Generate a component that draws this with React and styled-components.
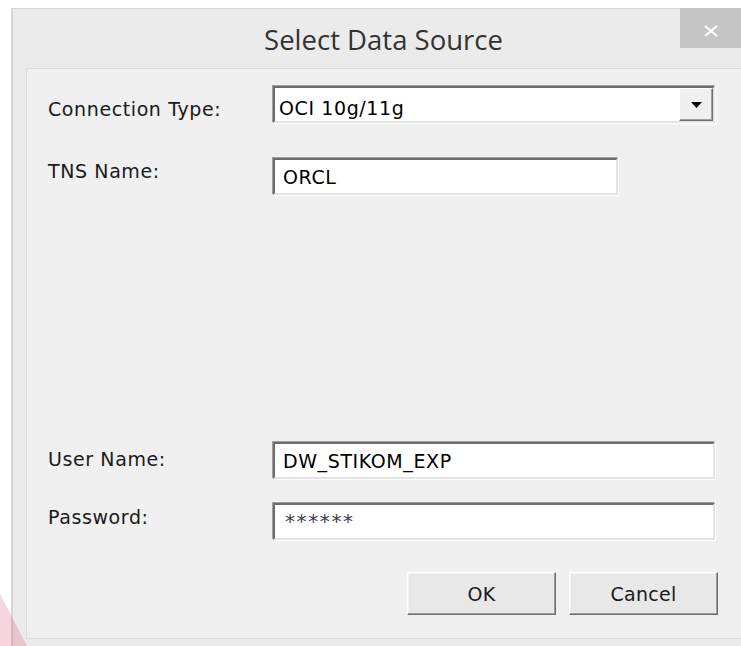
import React from 'react';
import styled, { createGlobalStyle } from 'styled-components';

const GlobalStyle = createGlobalStyle`
  html, body {
    margin: 0;
    padding: 0;
    background: #ffffff;
    overflow: hidden;
  }
`;

const Page = styled.div`
  position: relative;
  width: 741px;
  height: 646px;
  overflow: hidden;
  padding: 8px 0 0 11px;
  box-sizing: border-box;
`;

const Window = styled.div`
  width: 743px;
  height: 660px;
  box-sizing: border-box;
  border-left: 2px solid #d6d6d6;
  border-top: 1px solid #d6d6d6;
  background: #ebebeb;
  display: flex;
  flex-direction: column;
`;

const TitleBar = styled.div`
  height: 59px;
  flex: none;
  display: grid;
  grid-template-columns: 1fr auto 1fr;
  align-items: start;
`;

const Title = styled.div`
  grid-column: 2;
  padding-top: 15px;
  font-family: "Open Sans", "Noto Sans", sans-serif;
  font-size: 27.5px;
  line-height: 32px;
  color: #333333;
`;

const CloseButton = styled.div`
  grid-column: 3;
  justify-self: end;
  margin-top: -1px;
  width: 74px;
  height: 40px;
  background: #c6c6c6;
  display: flex;
  align-items: center;
  justify-content: center;
  padding: 6px 12px 0 0;
  box-sizing: border-box;
`;

const Panel = styled.div`
  margin-left: 13px;
  width: 720px;
  flex: none;
  box-sizing: border-box;
  background: #f0f0f0;
  border: 1px solid #dcdcdc;
  padding: 17px 29px 23px 21px;
  display: flex;
  flex-direction: column;
`;

const Row = styled.div`
  display: flex;
  align-items: flex-start;
  margin-top: ${p => p.$gap || 0}px;
`;

const fieldFont = `
  font-family: "DejaVu Sans", sans-serif;
  font-size: 19px;
  line-height: 20px;
  letter-spacing: 0.6px;
`;

const Label = styled.div`
  ${fieldFont}
  width: 225px;
  flex: none;
  padding-top: ${p => p.$offset}px;
  color: #1a1a1a;
`;

const sunken = `
  border-style: solid;
  border-width: 2px;
  border-color: #6d6d6d #e4e4e4 #e4e4e4 #6d6d6d;
  box-shadow: -1px -1px 0 #a0a0a0, 1px 1px 0 #ffffff;
`;

const Combo = styled.div`
  ${sunken}
  width: 442px;
  height: 37px;
  box-sizing: border-box;
  background: #ffffff;
  display: flex;
  align-items: stretch;
`;

const ComboText = styled.div`
  ${fieldFont}
  flex: 1;
  padding: 10px 0 0 4px;
  color: #000000;
`;

const DropButton = styled.div`
  width: 32px;
  background: #f0f0f0;
  border-style: solid;
  border-width: 1px;
  border-color: #ffffff #6d6d6d #6d6d6d #ffffff;
  box-shadow: inset -1px -1px 0 #a0a0a0;
  display: flex;
  align-items: center;
  justify-content: center;
`;

const Edit = styled.div`
  ${fieldFont}
  width: ${p => p.$width}px;
  height: 37px;
  box-sizing: border-box;
  background: #ffffff;
  ${sunken}
  padding: ${p => (p.$masked ? 6 : 7)}px 0 0 ${p => (p.$masked ? 10 : 8)}px;
  ${p => p.$masked && 'font-size: 20px; letter-spacing: 1.6px;'}
  color: ${p => (p.$masked ? '#3c3c4c' : '#000000')};
`;

const ButtonRow = styled.div`
  display: flex;
  justify-content: flex-end;
  gap: 13px;
  margin-top: 32px;
  margin-right: -2px;
`;

const Button = styled.div`
  width: 149px;
  height: 43px;
  box-sizing: border-box;
  background: #e8e8e8;
  border-style: solid;
  border-width: 1px;
  border-color: #ffffff #696969 #696969 #ffffff;
  box-shadow: inset -1px -1px 0 #a0a0a0, inset 1px 1px 0 #f4f4f4;
  display: flex;
  align-items: center;
  justify-content: center;
  font-family: "DejaVu Sans", sans-serif;
  font-size: 19px;
  letter-spacing: 0.3px;
  color: #1a1a1a;
`;

const Ribbon = styled.svg`
  position: absolute;
  left: 0;
  bottom: 0;
`;

const Cross = () => (
  <svg width="14" height="12" viewBox="0 0 14 12">
    <path d="M1 1 L13 11 M13 1 L1 11" stroke="#ffffff" strokeWidth="2" fill="none" />
  </svg>
);

const Arrow = () => (
  <svg width="11" height="6" viewBox="0 0 11 6">
    <path d="M0 0 H11 L5.5 6 Z" fill="#000000" />
  </svg>
);

export default function App() {
  return (
    <>
      <GlobalStyle />
      <Page>
        <Window>
          <TitleBar>
            <Title>Select Data Source</Title>
            <CloseButton>
              <Cross />
            </CloseButton>
          </TitleBar>
          <Panel>
            <Row>
              <Label $offset={13}>Connection Type:</Label>
              <Combo>
                <ComboText>OCI 10g/11g</ComboText>
                <DropButton>
                  <Arrow />
                </DropButton>
              </Combo>
            </Row>
            <Row $gap={35}>
              <Label $offset={3}>TNS Name:</Label>
              <Edit $width={345}>ORCL</Edit>
            </Row>
            <Row $gap={247}>
              <Label $offset={7}>User Name:</Label>
              <Edit $width={442}>DW_STIKOM_EXP</Edit>
            </Row>
            <Row $gap={24}>
              <Label $offset={4}>Password:</Label>
              <Edit $width={442} $masked>******</Edit>
            </Row>
            <ButtonRow>
              <Button>OK</Button>
              <Button>Cancel</Button>
            </ButtonRow>
          </Panel>
        </Window>
        <Ribbon width="30" height="52" viewBox="0 0 30 52">
          <polygon points="0,0 27,52 0,52" fill="rgba(214,70,95,0.22)" />
        </Ribbon>
      </Page>
    </>
  );
}
